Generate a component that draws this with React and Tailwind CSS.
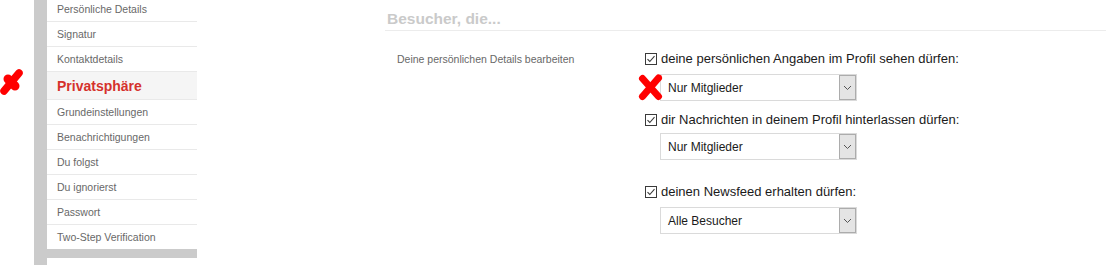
import React from "react";

const menu = [
  { label: "Persönliche Details" },
  { label: "Signatur" },
  { label: "Kontaktdetails" },
  { label: "Privatsphäre", active: true },
  { label: "Grundeinstellungen" },
  { label: "Benachrichtigungen" },
  { label: "Du folgst" },
  { label: "Du ignorierst" },
  { label: "Passwort" },
  { label: "Two-Step Verification", last: true },
];

function CheckBox() {
  return (
    <svg width="12" height="12" viewBox="0 0 12 12" className="shrink-0">
      <rect x="0.5" y="0.5" width="11" height="11" fill="white" stroke="#3a3a3a" strokeWidth="1" />
      <path d="M2.5 6.2 L4.8 8.5 L9.5 3.2" fill="none" stroke="#3a3a3a" strokeWidth="1.1" />
    </svg>
  );
}

function Select({ value }) {
  return (
    <div className="ml-[15px] flex h-[27px] w-[197px] border border-[#dadada] bg-white">
      <div className="flex flex-1 items-center pl-[7px] text-[12px] text-[#1a1a1a]">{value}</div>
      <div className="flex w-[17px] items-center justify-center border border-[#acacac] bg-[#e4e4e4]">
        <svg width="9" height="6" viewBox="0 0 9 6">
          <path d="M1 1 L4.5 4.5 L8 1" fill="none" stroke="#555" strokeWidth="1" />
        </svg>
      </div>
    </div>
  );
}

function Option({ label, value, className }) {
  return (
    <div className={className}>
      <div className="flex h-[16px] items-center gap-[4px] text-[13px] text-[#1a1a1a]">
        <CheckBox />
        <span>{label}</span>
      </div>
      <div className="mt-[7px]">
        <Select value={value} />
      </div>
    </div>
  );
}

export default function App() {
  return (
    <div
      className="relative flex h-[265px] w-[1106px] overflow-hidden bg-white"
      style={{ fontFamily: '"Liberation Sans", Arial, sans-serif' }}
    >
      <div className="w-[34px] shrink-0" />
      <div className="w-[13px] shrink-0 bg-[#cbcbcb]" />
      <div className="flex w-[150px] shrink-0 flex-col">
        <div className="-mt-[3px] flex flex-col">
          {menu.map((m) =>
            m.active ? (
              <div
                key={m.label}
                className="flex h-[28px] items-center border-b border-[#e9e9e9] bg-[#f5f5f5] pl-[10px] pt-[1px] text-[14px] font-bold text-[#d5312c]"
              >
                {m.label}
              </div>
            ) : (
              <div
                key={m.label}
                className={
                  m.last
                    ? "flex h-[24px] items-center pl-[10px] pt-[1px] text-[10.5px] text-[#686868]"
                    : "flex h-[25px] items-center border-b border-[#e9e9e9] pl-[10px] pt-[1px] text-[10.5px] text-[#686868]"
                }
              >
                {m.label}
              </div>
            )
          )}
        </div>
        <div className="h-[9px] bg-[#cbcbcb]" />
      </div>

      <div className="flex flex-1 flex-col pl-[188px]">
        <div className="border-b border-[#ececec] pb-[2px] pl-[2px] pt-[10px] text-[15.5px] font-bold leading-[18px] text-[#cacaca]">
          Besucher, die...
        </div>
        <div className="mt-[20px] flex">
          <div className="w-[260px] shrink-0 pl-[12px] text-[10.5px] leading-[16px] text-[#686868]">
            Deine persönlichen Details bearbeiten
          </div>
          <div className="flex flex-col">
            <Option label="deine persönlichen Angaben im Profil sehen dürfen:" value="Nur Mitglieder" />
            <div className="mt-[11px] flex h-[16px] items-center gap-[4px] text-[13px] text-[#1a1a1a]">
              <CheckBox />
              <span>dir Nachrichten in deinem Profil hinterlassen dürfen:</span>
            </div>
            <div className="mt-[5px]">
              <Select value="Nur Mitglieder" />
            </div>
            <Option className="mt-[24px]" label="deinen Newsfeed erhalten dürfen:" value="Alle Besucher" />
          </div>
        </div>
      </div>

      {/* red annotation marks */}
      <svg className="absolute left-0 top-[68px]" width="24" height="28" viewBox="0 0 24 28">
        <path d="M4 23 L19 5" stroke="#f00" strokeWidth="7.5" strokeLinecap="round" fill="none" />
        <path d="M8 11 L15 18" stroke="#f00" strokeWidth="9" strokeLinecap="round" fill="none" />
      </svg>
      <svg className="absolute left-[638px] top-[74px]" width="25" height="27" viewBox="0 0 25 27">
        <path d="M4.5 4.5 L20.5 22.5" stroke="#f00" strokeWidth="7" strokeLinecap="round" fill="none" />
        <path d="M20.5 4 L4.5 22.5" stroke="#f00" strokeWidth="7" strokeLinecap="round" fill="none" />
      </svg>
    </div>
  );
}
